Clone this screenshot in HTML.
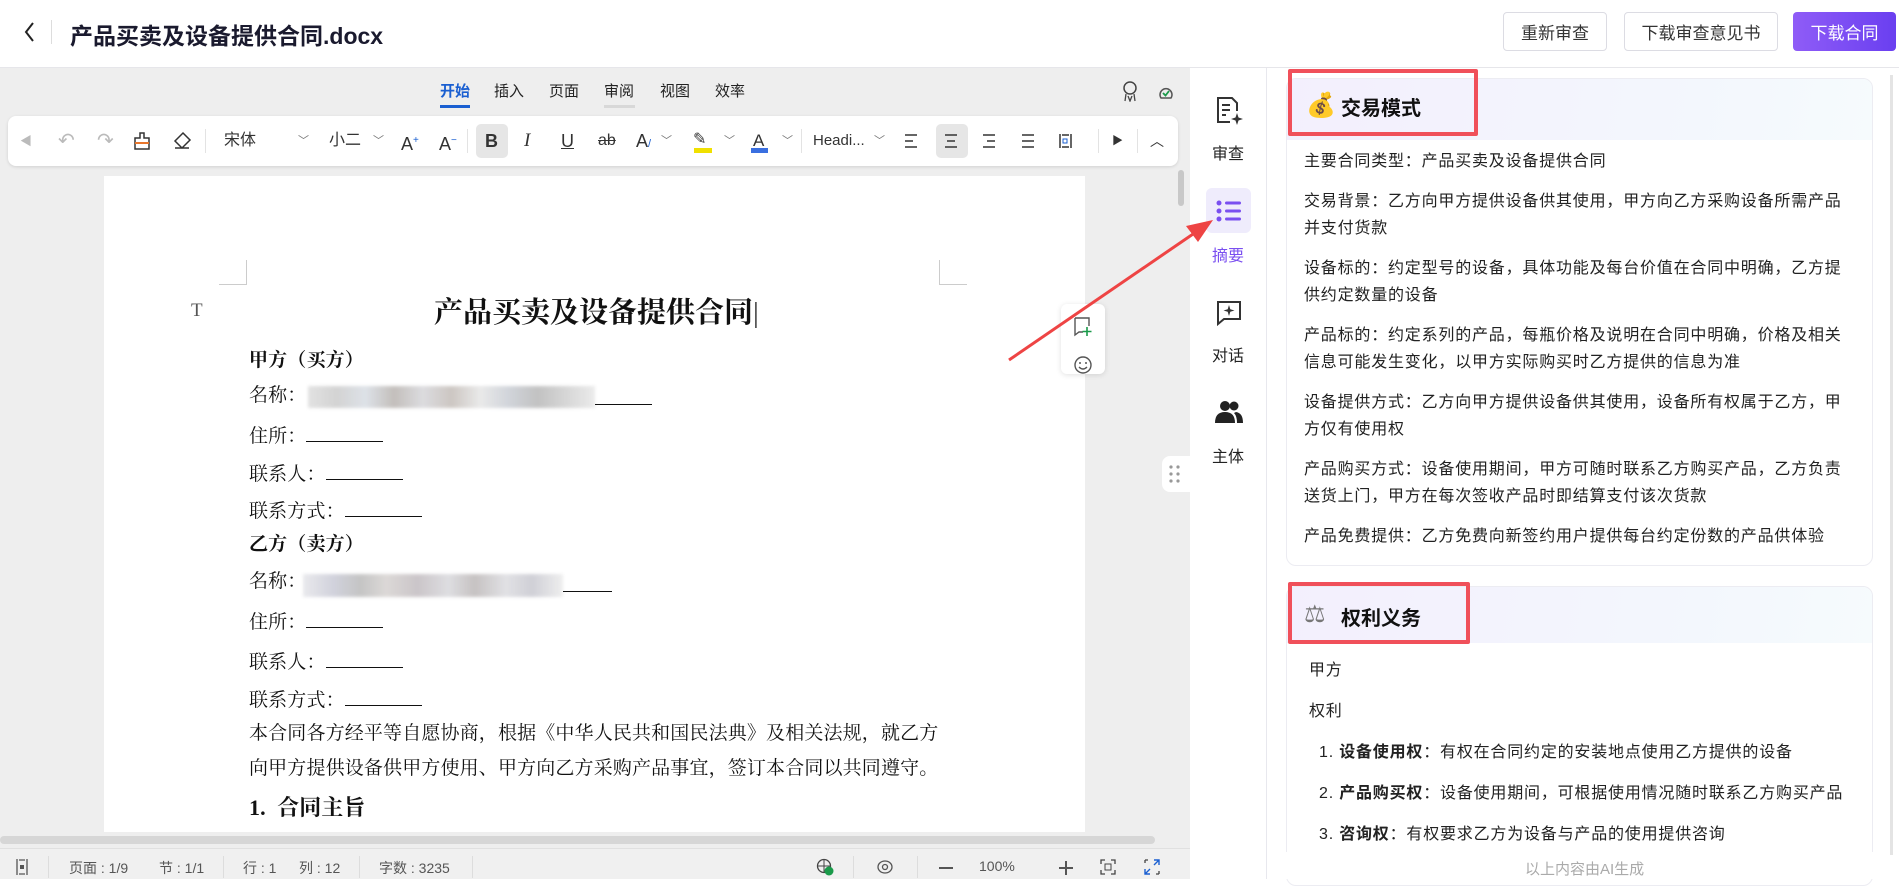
<!DOCTYPE html>
<html><head><meta charset="utf-8">
<style>
*{margin:0;padding:0;box-sizing:border-box}
body{width:1899px;height:879px;overflow:hidden;position:relative;background:#fff;font-family:"Liberation Sans","Noto Sans CJK SC",sans-serif;color:#1f1f2e}
.a{position:absolute}
.btn{position:absolute;top:12px;height:39px;border:1px solid #dcdce3;border-radius:4px;font-size:17px;color:#333;display:flex;align-items:center;justify-content:center;background:#fff}
.tab{position:absolute;top:80px;font-size:15px;color:#222}
.ti{position:absolute;top:129px;font-size:16px;color:#333;line-height:24px}
.doc{position:absolute;left:249px;font-family:"Liberation Serif","Noto Serif CJK SC",serif;font-size:19px;letter-spacing:0.15px;color:#111;line-height:24px}
.ul{display:inline-block;border-bottom:1px solid #111;height:20px;vertical-align:baseline}
.st{position:absolute;top:858px;font-size:14px;color:#555}
.sep{position:absolute;top:856px;width:1px;height:22px;background:#ddd}
.sb{position:absolute;width:1px;height:24px;top:129px;background:#e3e3e3}
.card p{font-size:16px;line-height:27px;color:#222;margin-bottom:13px;letter-spacing:.8px}
.lbl{position:absolute;font-size:16px;color:#222;width:76px;text-align:center;left:1190px}
</style></head><body>

<!-- header -->
<svg class="a" style="left:22px;top:20px" width="16" height="24" viewBox="0 0 16 24"><path d="M11 3 L4 12 L11 21" stroke="#222" stroke-width="2" fill="none"/></svg>
<div class="a" style="left:51px;top:20px;width:1px;height:24px;background:#ddd"></div>
<div class="a" style="left:70px;top:17px;font-size:23px;font-weight:bold;color:#1a1a2e">产品买卖及设备提供合同.docx</div>
<div class="btn" style="left:1503px;width:104px">重新审查</div>
<div class="btn" style="left:1624px;width:154px">下载审查意见书</div>
<div class="btn" style="left:1793px;width:103px;border:none;color:#fff;background:linear-gradient(90deg,#8f5cf7,#6a3ff0)">下载合同</div>
<div class="a" style="left:0;top:67px;width:1899px;height:1px;background:#e6e6ea"></div>

<!-- editor area -->
<div class="a" style="left:0;top:68px;width:1190px;height:811px;background:#eeeeee"></div>
<div class="tab" style="left:440px;color:#1a5fd1;font-weight:bold">开始</div>
<div class="a" style="left:440px;top:105px;width:30px;height:3px;background:#1a5fd1"></div>
<div class="tab" style="left:494px">插入</div>
<div class="tab" style="left:549px">页面</div>
<div class="tab" style="left:604px">审阅</div>
<div class="a" style="left:604px;top:105px;width:31px;height:3px;background:#d8d8d8"></div>
<div class="tab" style="left:660px">视图</div>
<div class="tab" style="left:715px">效率</div>
<svg class="a" style="left:1120px;top:80px" width="20" height="22" viewBox="0 0 20 22"><circle cx="10" cy="8" r="6" fill="none" stroke="#444" stroke-width="1.5"/><path d="M6 14 L5 21 M14 14 L15 21 M8 16 L10 21 L12 16" stroke="#444" stroke-width="1.3" fill="none"/></svg>
<svg class="a" style="left:1156px;top:82px" width="20" height="20" viewBox="0 0 20 20"><path d="M5 16 A6 6 0 1 1 15 16 Z" fill="none" stroke="#555" stroke-width="1.5"/><path d="M7 11 L9.5 13.5 L13 9" stroke="#1a9a4a" stroke-width="1.8" fill="none"/></svg>

<!-- toolbar -->
<div class="a" style="left:8px;top:116px;width:1170px;height:50px;background:#fff;border-radius:8px;box-shadow:0 1px 3px rgba(0,0,0,.12)"></div>
<div class="ti" style="left:20px;color:#bbb;font-size:12px">◀</div>
<div class="ti" style="left:58px;color:#bbb;font-size:20px">↶</div>
<div class="ti" style="left:97px;color:#bbb;font-size:20px">↷</div>
<svg class="a" style="left:133px;top:131px" width="18" height="20" viewBox="0 0 18 20"><path d="M7 2h4v5h5v11H2V7h5z" fill="none" stroke="#333" stroke-width="1.5"/><rect x="2" y="11" width="14" height="2" fill="#e8762c"/></svg>
<svg class="a" style="left:172px;top:131px" width="20" height="20" viewBox="0 0 20 20"><path d="M11 2 L18 9 L10 17 L3 10 Z M3 17 H17" fill="none" stroke="#333" stroke-width="1.5"/></svg>
<div class="sb" style="left:205px"></div>
<div class="ti" style="left:224px">宋体</div>
<div class="ti" style="left:298px;font-size:11px;color:#777">﹀</div>
<div class="ti" style="left:329px">小二</div>
<div class="ti" style="left:373px;font-size:11px;color:#777">﹀</div>
<div class="ti" style="left:401px;font-size:18px">A<sup style="font-size:10px;color:#1a5fd1">+</sup></div>
<div class="ti" style="left:439px;font-size:18px">A<sup style="font-size:10px;color:#1a5fd1">−</sup></div>
<div class="sb" style="left:467px"></div>
<div class="a" style="left:476px;top:124px;width:32px;height:34px;background:#e6e6e6;border-radius:5px"></div>
<div class="ti" style="left:485px;font-weight:bold;font-size:18px">B</div>
<div class="ti" style="left:524px;font-style:italic;font-family:'Liberation Serif';font-size:19px">I</div>
<div class="ti" style="left:561px;text-decoration:underline;font-size:18px">U</div>
<div class="ti" style="left:598px;text-decoration:line-through;font-size:16px">ab</div>
<div class="ti" style="left:636px;font-size:18px">A<span style="font-size:11px;color:#1a5fd1">/</span></div>
<div class="ti" style="left:661px;font-size:11px;color:#777">﹀</div>
<div class="a" style="left:693px;top:129px;font-size:16px;color:#333">✎</div>
<div class="a" style="left:694px;top:148px;width:18px;height:5px;background:#f0e000"></div>
<div class="ti" style="left:724px;font-size:11px;color:#777">﹀</div>
<div class="ti" style="left:753px;font-size:17px">A</div>
<div class="a" style="left:751px;top:148px;width:17px;height:5px;background:#3a6fe0"></div>
<div class="ti" style="left:782px;font-size:11px;color:#777">﹀</div>
<div class="sb" style="left:801px"></div>
<div class="ti" style="left:813px;font-size:15px">Headi...</div>
<div class="ti" style="left:874px;font-size:11px;color:#777">﹀</div>
<div class="a" style="left:936px;top:124px;width:32px;height:34px;background:#e6e6e6;border-radius:5px"></div>
<svg class="a" style="left:903px;top:133px" width="200" height="16" viewBox="0 0 200 16"><g stroke="#333" stroke-width="1.5"><path d="M2 2h12M2 8h8M2 14h12"/><path d="M42 2h12M44 8h8M42 14h12"/><path d="M80 2h12M84 8h8M80 14h12"/><path d="M119 2h12M119 8h12M119 14h12"/><path d="M157 1v14M168 1v14M159 2h7M159 14h7"/></g><path d="M160 6h4v4h-4z" fill="none" stroke="#1a5fd1" stroke-width="1"/></svg>
<div class="sb" style="left:1098px"></div>
<div class="ti" style="left:1112px;font-size:11px">▶</div>
<div class="sb" style="left:1137px"></div>
<div class="ti" style="left:1150px;font-size:14px">︿</div>

<!-- page -->
<div class="a" style="left:104px;top:176px;width:981px;height:656px;background:#fff"></div>
<div class="a" style="left:1178px;top:170px;width:6px;height:36px;background:#c8c8c8;border-radius:3px"></div>
<div class="a" style="left:219px;top:260px;width:28px;height:25px;border-right:1px solid #ccc;border-bottom:1px solid #ccc"></div>
<div class="a" style="left:939px;top:260px;width:28px;height:25px;border-left:1px solid #ccc;border-bottom:1px solid #ccc"></div>
<div class="a" style="left:191px;top:300px;font-family:'Liberation Serif';font-size:19px;color:#555">T</div>
<div class="a" style="left:434px;top:290px;font-family:'Liberation Serif','Noto Serif CJK SC',serif;font-size:29px;font-weight:bold;color:#111">产品买卖及设备提供合同<span style="font-weight:normal;color:#333">|</span></div>
<div class="doc" style="top:349px;font-weight:bold">甲方（买方）</div>
<div class="doc" style="top:384px">名称：</div>
<div class="a" style="left:308px;top:386px;width:287px;height:22px;background:linear-gradient(90deg,#ddd 0,#ccc 10%,#d8dde4 20%,#b9b4b0 30%,#d6d6da 40%,#c4bdb8 50%,#e6e6e6 60%,#c9cdd4 70%,#b8b8b8 80%,#d0d0d0 90%,#e8e8e8 100%);filter:blur(1.5px);opacity:.85"></div>
<div class="a" style="left:595px;top:404px;width:57px;height:1px;background:#111"></div>
<div class="doc" style="top:422px">住所：<span class="ul" style="width:77px"></span></div>
<div class="doc" style="top:460px">联系人：<span class="ul" style="width:77px"></span></div>
<div class="doc" style="top:497px">联系方式：<span class="ul" style="width:77px"></span></div>
<div class="doc" style="top:533px;font-weight:bold">乙方（卖方）</div>
<div class="doc" style="top:570px">名称：</div>
<div class="a" style="left:303px;top:574px;width:260px;height:23px;background:linear-gradient(90deg,#e6e6ea 0,#c9cad6 12%,#bbb 22%,#d6d2d0 32%,#c2bcc0 44%,#d8d8dc 56%,#bdb8b8 66%,#dcdce0 78%,#c8c8d0 88%,#ececec 100%);filter:blur(1.5px);opacity:.85"></div>
<div class="a" style="left:563px;top:591px;width:49px;height:1px;background:#111"></div>
<div class="doc" style="top:608px">住所：<span class="ul" style="width:77px"></span></div>
<div class="doc" style="top:648px">联系人：<span class="ul" style="width:77px"></span></div>
<div class="doc" style="top:686px">联系方式：<span class="ul" style="width:77px"></span></div>
<div class="doc" style="top:722px">本合同各方经平等自愿协商，根据《中华人民共和国民法典》及相关法规，就乙方</div>
<div class="doc" style="top:757px">向甲方提供设备供甲方使用、甲方向乙方采购产品事宜，签订本合同以共同遵守。</div>
<div class="doc" style="top:796px;font-weight:bold;font-size:22px">1.&nbsp;&nbsp;合同主旨</div>

<!-- floating tools -->
<div class="a" style="left:1061px;top:304px;width:44px;height:70px;background:#fff;border-radius:6px;box-shadow:0 1px 6px rgba(0,0,0,.12)"></div>
<svg class="a" style="left:1072px;top:316px" width="22" height="22" viewBox="0 0 22 22"><path d="M3 2h14v8 M3 2v17l4-3h4" fill="none" stroke="#555" stroke-width="1.4"/><path d="M15 11v9M10.5 15.5h9" stroke="#1a9a4a" stroke-width="1.6"/></svg>
<svg class="a" style="left:1073px;top:355px" width="20" height="20" viewBox="0 0 20 20"><circle cx="10" cy="10" r="8" fill="none" stroke="#555" stroke-width="1.4"/><circle cx="7" cy="8" r="1" fill="#555"/><circle cx="13" cy="8" r="1" fill="#555"/><path d="M6 12 Q10 16 14 12" fill="none" stroke="#555" stroke-width="1.4"/></svg>
<div class="a" style="left:1162px;top:456px;width:28px;height:36px;background:#fff;border-radius:8px 0 0 8px"></div>
<svg class="a" style="left:1168px;top:464px" width="14" height="20"><g fill="#999"><circle cx="3" cy="3" r="1.6"/><circle cx="10" cy="3" r="1.6"/><circle cx="3" cy="10" r="1.6"/><circle cx="10" cy="10" r="1.6"/><circle cx="3" cy="17" r="1.6"/><circle cx="10" cy="17" r="1.6"/></g></svg>

<!-- scrollbars + status -->
<div class="a" style="left:0;top:836px;width:1155px;height:8px;background:#d6d6d6;border-radius:4px"></div>
<div class="a" style="left:0;top:848px;width:1190px;height:1px;background:#e0e0e0"></div>
<div class="a" style="left:0;top:849px;width:1190px;height:30px;background:#f0f0f0"></div>
<svg class="a" style="left:15px;top:858px" width="14" height="18"><path d="M2 1v16M12 1v16M4 2h6M4 16h6" stroke="#555" stroke-width="1.3"/><rect x="5" y="7" width="4" height="4" fill="#555"/></svg>
<div class="sep" style="left:48px"></div>
<div class="st" style="left:69px">页面 : 1/9</div>
<div class="st" style="left:159px">节 : 1/1</div>
<div class="sep" style="left:223px"></div>
<div class="st" style="left:243px">行 : 1</div>
<div class="st" style="left:299px">列 : 12</div>
<div class="sep" style="left:359px"></div>
<div class="st" style="left:379px">字数 : 3235</div>
<div class="sep" style="left:472px"></div>
<svg class="a" style="left:816px;top:858px" width="18" height="18"><circle cx="8" cy="8" r="6.5" fill="none" stroke="#444" stroke-width="1.3"/><path d="M1.5 8h13M8 1.5v13" stroke="#444" stroke-width="1"/><circle cx="13" cy="13" r="4.5" fill="#1a9a4a"/></svg>
<div class="sep" style="left:853px"></div>
<svg class="a" style="left:876px;top:859px" width="18" height="16"><ellipse cx="9" cy="8" rx="7" ry="6" fill="none" stroke="#555" stroke-width="1.3"/><circle cx="9" cy="8" r="2.5" fill="none" stroke="#555" stroke-width="1.3"/></svg>
<div class="sep" style="left:917px"></div>
<div class="a" style="left:939px;top:867px;width:14px;height:1.5px;background:#555"></div>
<div class="st" style="left:979px">100%</div>
<div class="a" style="left:1059px;top:867px;width:14px;height:1.5px;background:#555"></div>
<div class="a" style="left:1065px;top:861px;width:1.5px;height:14px;background:#555"></div>
<svg class="a" style="left:1100px;top:859px" width="16" height="16"><path d="M1 5V1h4M11 1h4v4M15 11v4h-4M5 15H1v-4" fill="none" stroke="#444" stroke-width="1.3"/><rect x="5" y="5" width="6" height="6" fill="none" stroke="#444"/></svg>
<svg class="a" style="left:1144px;top:859px" width="16" height="16"><path d="M10 1h5v5M15 1l-5 5M6 15H1v-5M1 15l5-5" fill="none" stroke="#1a5fd1" stroke-width="1.4"/><path d="M1 1h3M1 1v3M15 15h-3M15 15v-3" stroke="#444" stroke-width="1.3"/></svg>

<!-- sidebar -->
<div class="a" style="left:1266px;top:68px;width:1px;height:811px;background:#e8e8ee"></div>
<svg class="a" style="left:1215px;top:96px" width="28" height="30" viewBox="0 0 28 30"><path d="M15 26H3V2h14l5 5v8" fill="none" stroke="#333" stroke-width="2"/><path d="M7 9h8M7 14h8M7 19h4" stroke="#333" stroke-width="2"/><path d="M22 17 L23.5 21.5 L28 23 L23.5 24.5 L22 29 L20.5 24.5 L16 23 L20.5 21.5 Z" fill="#333"/></svg>
<div class="lbl" style="top:140px">审查</div>
<div class="a" style="left:1206px;top:188px;width:45px;height:45px;background:#efecfc;border-radius:6px"></div>
<svg class="a" style="left:1216px;top:200px" width="26" height="22"><g fill="#7a4ff0"><circle cx="3" cy="3" r="2.5"/><circle cx="3" cy="11" r="2.5"/><circle cx="3" cy="19" r="2.5"/><rect x="9" y="1.5" width="16" height="3" rx="1.5"/><rect x="9" y="9.5" width="16" height="3" rx="1.5"/><rect x="9" y="17.5" width="16" height="3" rx="1.5"/></g></svg>
<div class="lbl" style="top:242px;color:#7a4ff0">摘要</div>
<svg class="a" style="left:1216px;top:300px" width="26" height="26" viewBox="0 0 26 26"><path d="M2 2h22v17H8l-6 5z" fill="none" stroke="#333" stroke-width="2"/><path d="M13 5 L14.3 9.2 L18.5 10.5 L14.3 11.8 L13 16 L11.7 11.8 L7.5 10.5 L11.7 9.2 Z" fill="#333"/></svg>
<div class="lbl" style="top:342px">对话</div>
<svg class="a" style="left:1215px;top:400px" width="28" height="24" viewBox="0 0 28 24"><circle cx="10" cy="6" r="5" fill="#222"/><circle cx="19" cy="6" r="4.5" fill="#222"/><path d="M0 23 Q0 12 10 12 Q20 12 20 23Z" fill="#222"/><path d="M21 12 Q28 13 28 23 H22 Q22 16 19 13Z" fill="#222"/></svg>
<div class="lbl" style="top:443px">主体</div>

<!-- right panel -->
<div class="a" style="left:1890px;top:75px;width:3px;height:780px;background:#e4e4e4"></div>
<div class="a card" style="left:1286px;top:78px;width:587px;height:488px;border:1px solid #ececf2;border-radius:10px;background:#fff;overflow:hidden">
  <div style="height:61px;background:linear-gradient(100deg,#f3effd,#f3f7fd 70%,#f6fbfd)"></div>
  <div style="padding:8px 26px 0 17px">
    <p>主要合同类型：产品买卖及设备提供合同</p>
    <p>交易背景：乙方向甲方提供设备供其使用，甲方向乙方采购设备所需产品并支付货款</p>
    <p>设备标的：约定型号的设备，具体功能及每台价值在合同中明确，乙方提供约定数量的设备</p>
    <p>产品标的：约定系列的产品，每瓶价格及说明在合同中明确，价格及相关信息可能发生变化，以甲方实际购买时乙方提供的信息为准</p>
    <p>设备提供方式：乙方向甲方提供设备供其使用，设备所有权属于乙方，甲方仅有使用权</p>
    <p>产品购买方式：设备使用期间，甲方可随时联系乙方购买产品，乙方负责送货上门，甲方在每次签收产品时即结算支付该次货款</p>
    <p>产品免费提供：乙方免费向新签约用户提供每台约定份数的产品供体验</p>
  </div>
</div>
<div class="a" style="left:1288px;top:69px;width:190px;height:67px;border:4px solid #f0505a;border-radius:2px"></div>
<div class="a" style="left:1306px;top:91px;font-size:24px">💰</div>
<div class="a" style="left:1341px;top:92px;font-size:20px;font-weight:bold;color:#111">交易模式</div>

<div class="a card" style="left:1286px;top:586px;width:587px;height:300px;border:1px solid #ececf2;border-radius:10px;background:#fff;overflow:hidden">
  <div style="height:56px;background:linear-gradient(100deg,#f3effd,#f3f7fd 70%,#f6fbfd)"></div>
  <div style="padding:14px 10px 0 22px">
    <p style="margin-bottom:14px">甲方</p>
    <p style="margin-bottom:14px">权利</p>
    <p style="margin-bottom:14px;padding-left:10px">1. <b>设备使用权</b>：有权在合同约定的安装地点使用乙方提供的设备</p>
    <p style="margin-bottom:14px;padding-left:10px">2. <b>产品购买权</b>：设备使用期间，可根据使用情况随时联系乙方购买产品</p>
    <p style="margin-bottom:14px;padding-left:10px">3. <b>咨询权</b>：有权要求乙方为设备与产品的使用提供咨询</p>
  </div>
</div>
<div class="a" style="left:1288px;top:582px;width:182px;height:62px;border:4px solid #f0505a;border-radius:2px"></div>
<div class="a" style="left:1304px;top:600px;font-size:24px;color:#777">⚖</div>
<div class="a" style="left:1341px;top:602px;font-size:20px;font-weight:bold;color:#111">权利义务</div>
<div class="a" style="left:1270px;top:852px;width:620px;height:27px;background:#fff"></div>
<div class="a" style="left:1525px;top:858px;font-size:15px;color:#aaa">以上内容由AI生成</div>

<!-- red arrow -->
<svg class="a" style="left:0;top:0" width="1899" height="879"><line x1="1009" y1="360" x2="1196" y2="232" stroke="#ee4444" stroke-width="3"/><path d="M1213 220 L1186 226 L1198 242 Z" fill="#ee4444"/></svg>
</body></html>
